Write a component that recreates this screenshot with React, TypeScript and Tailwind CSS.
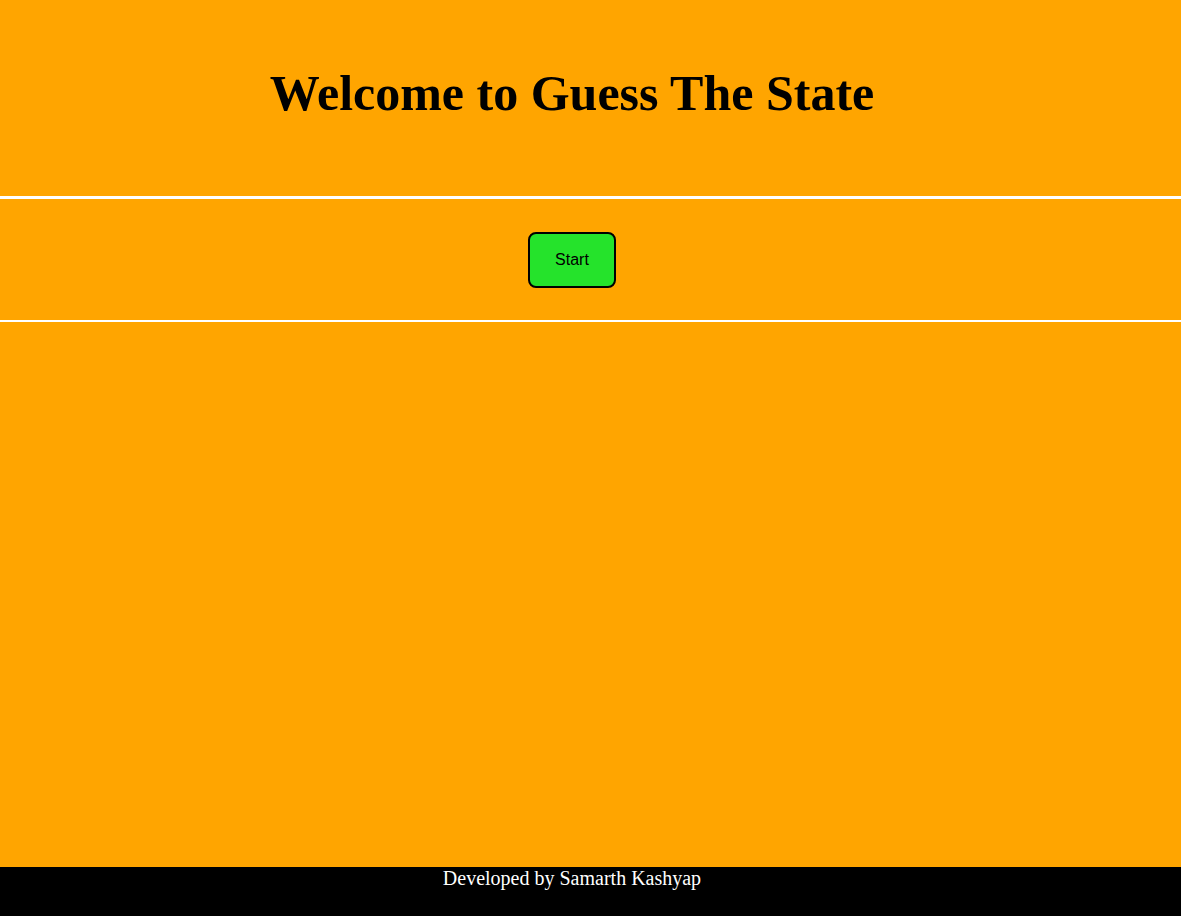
import React from "react";

const serif = "font-['Times_New_Roman','Liberation_Serif',serif]";

export default function App() {
  return (
    <div className="min-h-[916px] flex flex-col bg-[#ffa500]">
      {/* Header */}
      <header className="h-[196px] pr-[37px] pt-[68px]">
        <h1 className={`${serif} text-center text-[50px] font-bold leading-none text-black`}>
          Welcome to Guess The State
        </h1>
      </header>

      <div className="h-[3px] bg-white" />

      {/* Controls */}
      <section className="h-[121px] pr-[37px] pt-[33px] flex justify-center">
        <button
          type="button"
          className="w-[88px] h-[56px] rounded-lg border-2 border-black bg-[#25e32b] text-black text-base font-['Arial','Liberation_Sans',sans-serif]"
        >
          Start
        </button>
      </section>

      <div className="h-[2px] bg-white" />

      <main className="flex-1" />

      {/* Footer */}
      <footer className="h-[49px] bg-black pr-[37px]">
        <p className={`${serif} text-center text-[20px] leading-[23px] text-white`}>
          Developed by Samarth Kashyap
        </p>
      </footer>
    </div>
  );
}
